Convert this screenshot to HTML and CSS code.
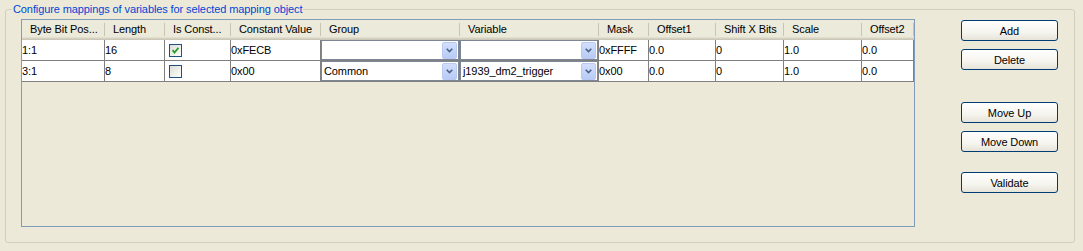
FILE: index.html
```html
<!DOCTYPE html>
<html lang="en">
<head>
    <meta charset="UTF-8">
    <title>Mapping variables</title>
    <link rel="stylesheet" href="styles.css">
</head>
<body>
    <fieldset class="group">
        <legend>Configure mappings of variables for selected mapping object</legend>
        <div class="group-body">
            <div class="grid">
                <div class="grid-head">
                    <div class="hcell">Byte Bit Pos...</div>
                    <div class="hcell">Length</div>
                    <div class="hcell">Is Const...</div>
                    <div class="hcell">Constant Value</div>
                    <div class="hcell">Group</div>
                    <div class="hcell">Variable</div>
                    <div class="hcell">Mask</div>
                    <div class="hcell">Offset1</div>
                    <div class="hcell">Shift X Bits</div>
                    <div class="hcell">Scale</div>
                    <div class="hcell">Offset2</div>
                </div>
                <div class="grid-row">
                    <div class="cell">1:1</div>
                    <div class="cell">16</div>
                    <div class="cell"><span class="check checked">
                        <svg width="7" height="7" viewBox="0 0 7 7"><path d="M0.5 3 L2.5 5.5 L6.5 0.8" fill="none" stroke="#21a121" stroke-width="1.8"/></svg>
                    </span></div>
                    <div class="cell">0xFECB</div>
                    <div class="cell combo-cell"><div class="combo"><span class="combo-text"></span><span class="combo-btn"><svg width="7" height="5" viewBox="0 0 7 5"><path d="M0.7 0.8 L3.5 3.6 L6.3 0.8" fill="none" stroke="#4d6185" stroke-width="1.6"/></svg></span></div></div>
                    <div class="cell combo-cell"><div class="combo"><span class="combo-text"></span><span class="combo-btn"><svg width="7" height="5" viewBox="0 0 7 5"><path d="M0.7 0.8 L3.5 3.6 L6.3 0.8" fill="none" stroke="#4d6185" stroke-width="1.6"/></svg></span></div></div>
                    <div class="cell">0xFFFF</div>
                    <div class="cell">0.0</div>
                    <div class="cell">0</div>
                    <div class="cell">1.0</div>
                    <div class="cell">0.0</div>
                </div>
                <div class="grid-row">
                    <div class="cell">3:1</div>
                    <div class="cell">8</div>
                    <div class="cell"><span class="check"></span></div>
                    <div class="cell">0x00</div>
                    <div class="cell combo-cell"><div class="combo"><span class="combo-text">Common</span><span class="combo-btn"><svg width="7" height="5" viewBox="0 0 7 5"><path d="M0.7 0.8 L3.5 3.6 L6.3 0.8" fill="none" stroke="#4d6185" stroke-width="1.6"/></svg></span></div></div>
                    <div class="cell combo-cell"><div class="combo"><span class="combo-text">j1939_dm2_trigger</span><span class="combo-btn"><svg width="7" height="5" viewBox="0 0 7 5"><path d="M0.7 0.8 L3.5 3.6 L6.3 0.8" fill="none" stroke="#4d6185" stroke-width="1.6"/></svg></span></div></div>
                    <div class="cell">0x00</div>
                    <div class="cell">0.0</div>
                    <div class="cell">0</div>
                    <div class="cell">1.0</div>
                    <div class="cell">0.0</div>
                </div>
            </div>

            <div class="actions">
                <button class="btn">Add</button>
                <button class="btn">Delete</button>
                <button class="btn gap-big">Move Up</button>
                <button class="btn">Move Down</button>
                <button class="btn gap-mid">Validate</button>
            </div>
        </div>
    </fieldset>
</body>
</html>
```

FILE: styles.css
```css
/* global */
* {
    box-sizing: border-box;
}

html, body {
    margin: 0;
    padding: 0;
}

body {
    background-color: #ece9d8;
    font-family: 'Liberation Sans', Arial, sans-serif;
    font-size: 11px;
    letter-spacing: -0.1px;
    color: #000;
}

/* group box */
.group {
    margin: 3px 8px 8px 5px;
    padding: 0;
    border: 1px solid #d0d0bf;
    border-radius: 3px;
}

.group legend {
    margin-left: 6px;
    padding: 0 1px;
    line-height: 13px;
    color: #0046d5;
}

.group-body {
    display: flex;
    align-items: flex-start;
    padding: 3px 0 15px 15px;
}

/* table */
.grid {
    width: 894px;
    height: 208px;
    border: 1px solid #7f9db9;
    background-color: #ece9d8;
}

.grid-head,
.grid-row {
    display: grid;
    grid-template-columns: 83px 60px 66px 90px 139px 139px 50px 67px 68px 78px 52px;
}

.grid-head {
    height: 20px;
    background: linear-gradient(to bottom, #ebeadb 0, #ebeadb 17px, #e2decd 17px, #e2decd 18px, #d6d2c2 18px, #d6d2c2 19px, #cbc7b8 19px);
}

.hcell {
    position: relative;
    padding-left: 8px;
    line-height: 19px;
    white-space: nowrap;
    overflow: hidden;
}

.hcell::after {
    content: '';
    position: absolute;
    right: 0;
    top: 3px;
    bottom: 4px;
    width: 1px;
    background-color: #c7c5b2;
    box-shadow: 1px 0 0 #fff;
}

.grid-row {
    height: 21px;
}

.cell {
    display: flex;
    align-items: center;
    background-color: #fff;
    border-right: 1px solid #808080;
    border-bottom: 1px solid #808080;
    white-space: nowrap;
    overflow: hidden;
}

/* checkbox */
.check {
    display: flex;
    align-items: center;
    justify-content: center;
    width: 13px;
    height: 13px;
    margin-left: 4px;
    border: 1px solid #1c5180;
    background: linear-gradient(135deg, #dcdcd7 0%, #f4f4f1 70%, #fff 100%);
}

/* combo boxes */
.combo-cell {
    align-items: stretch;
}

.combo {
    flex: 1;
    display: flex;
    align-items: center;
    border: 1px solid #7c8694;
    padding: 1px;
    background-color: #fff;
}

.combo-text {
    flex: 1;
    padding-left: 1px;
}

.combo-btn {
    display: flex;
    align-items: center;
    justify-content: center;
    width: 15px;
    height: 17px;
    border: 1px solid #b9c9ef;
    border-radius: 2px;
    background: linear-gradient(to bottom, #d2defc, #b8cbf6);
}

/* buttons */
.actions {
    display: flex;
    flex-direction: column;
    gap: 8px;
    margin-left: 46px;
    margin-top: 1px;
}

.btn {
    width: 97px;
    height: 21px;
    padding: 0;
    border: 1px solid #003c74;
    border-radius: 3px;
    background: linear-gradient(to bottom, #ffffff 0%, #f5f4ee 60%, #e6e3d8 100%);
    font-family: inherit;
    font-size: 11px;
    letter-spacing: -0.1px;
    color: #000;
}

.gap-big {
    margin-top: 24px;
}

.gap-mid {
    margin-top: 12px;
}
```
